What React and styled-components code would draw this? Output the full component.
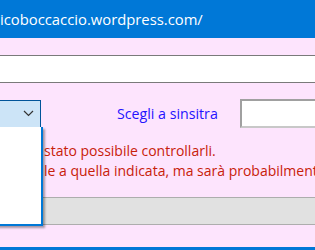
import React from 'react';
import styled, { createGlobalStyle } from 'styled-components';

const Global = createGlobalStyle`
  html, body {
    margin: 0;
    padding: 0;
    overflow: hidden;
    background: #fde4fd;
  }
  body {
    font-family: "Open Sans", "Noto Sans", sans-serif;
  }
`;

const Window = styled.div`
  width: 315px;
  height: 250px;
  display: flex;
  flex-direction: column;
  background: #fde4fd;
  border-bottom: 3px solid #0078d7;
  box-sizing: border-box;
  overflow: hidden;
`;

const TitleBar = styled.div`
  height: 38px;
  flex: none;
  background: #0078d7;
  color: #ffffff;
  font-size: 14.8px;
  display: flex;
  align-items: center;
  white-space: nowrap;
  padding-left: 0;
`;

const Content = styled.div`
  position: relative;
  flex: 1;
  display: flex;
  flex-direction: column;
  padding-top: 17px;
`;

const UrlInput = styled.div`
  height: 26px;
  margin: 0 -10px;
  background: #ffffff;
  border-top: 1px solid #7a7a7a;
  border-bottom: 1px solid #7a7a7a;
`;

const Row = styled.div`
  display: flex;
  align-items: center;
  margin-top: 16px;
  height: 29px;
`;

const Select = styled.div`
  width: 92px;
  height: 26px;
  margin-left: -59px;
  flex: none;
  background: #cce4f7;
  border: 1px solid #005499;
  display: flex;
  align-items: center;
  justify-content: flex-end;
  padding-right: 6px;
  box-sizing: content-box;
`;

const Label = styled.span`
  margin-left: 76px;
  color: #2412ff;
  font-size: 14.2px;
  white-space: nowrap;
`;

const SideInput = styled.div`
  margin-left: 22px;
  flex: 1;
  height: 25px;
  margin-right: -10px;
  background: #ffffff;
  border-top: 2px solid #a0a0a0;
  border-left: 2px solid #a0a0a0;
  border-bottom: 2px solid #c8c8c8;
`;

const Message = styled.p`
  margin: 13px 0 0;
  padding-left: 44px;
  color: #c8200a;
  font-size: 14px;
  line-height: 20px;
  white-space: nowrap;
`;

const Button = styled.div`
  margin: 16px -10px 0;
  height: 26px;
  background: #e1e1e1;
  border: 1px solid #adadad;
`;

const DropList = styled.div`
  position: absolute;
  left: -10px;
  top: 89px;
  width: 49px;
  height: 97px;
  background: #ffffff;
  border: 2px solid #0078d7;
  border-top: none;
  box-shadow: 2px 2px 2px rgba(0, 0, 0, 0.35);
`;

const Chevron = () => (
  <svg width="11" height="7" viewBox="0 0 11 7">
    <path d="M1 1l4.5 4.5L10 1" fill="none" stroke="#333" strokeWidth="1.2" />
  </svg>
);

export default function App() {
  return (
    <>
      <Global />
      <Window>
        <TitleBar>icoboccaccio.wordpress.com/</TitleBar>
        <Content>
          <UrlInput />
          <Row>
            <Select>
              <Chevron />
            </Select>
            <Label>Scegli a sinsitra</Label>
            <SideInput />
          </Row>
          <Message>
            stato possibile controllarli.
            <br />
            le a quella indicata, ma sarà probabilmente
          </Message>
          <Button />
          <DropList />
        </Content>
      </Window>
    </>
  );
}
